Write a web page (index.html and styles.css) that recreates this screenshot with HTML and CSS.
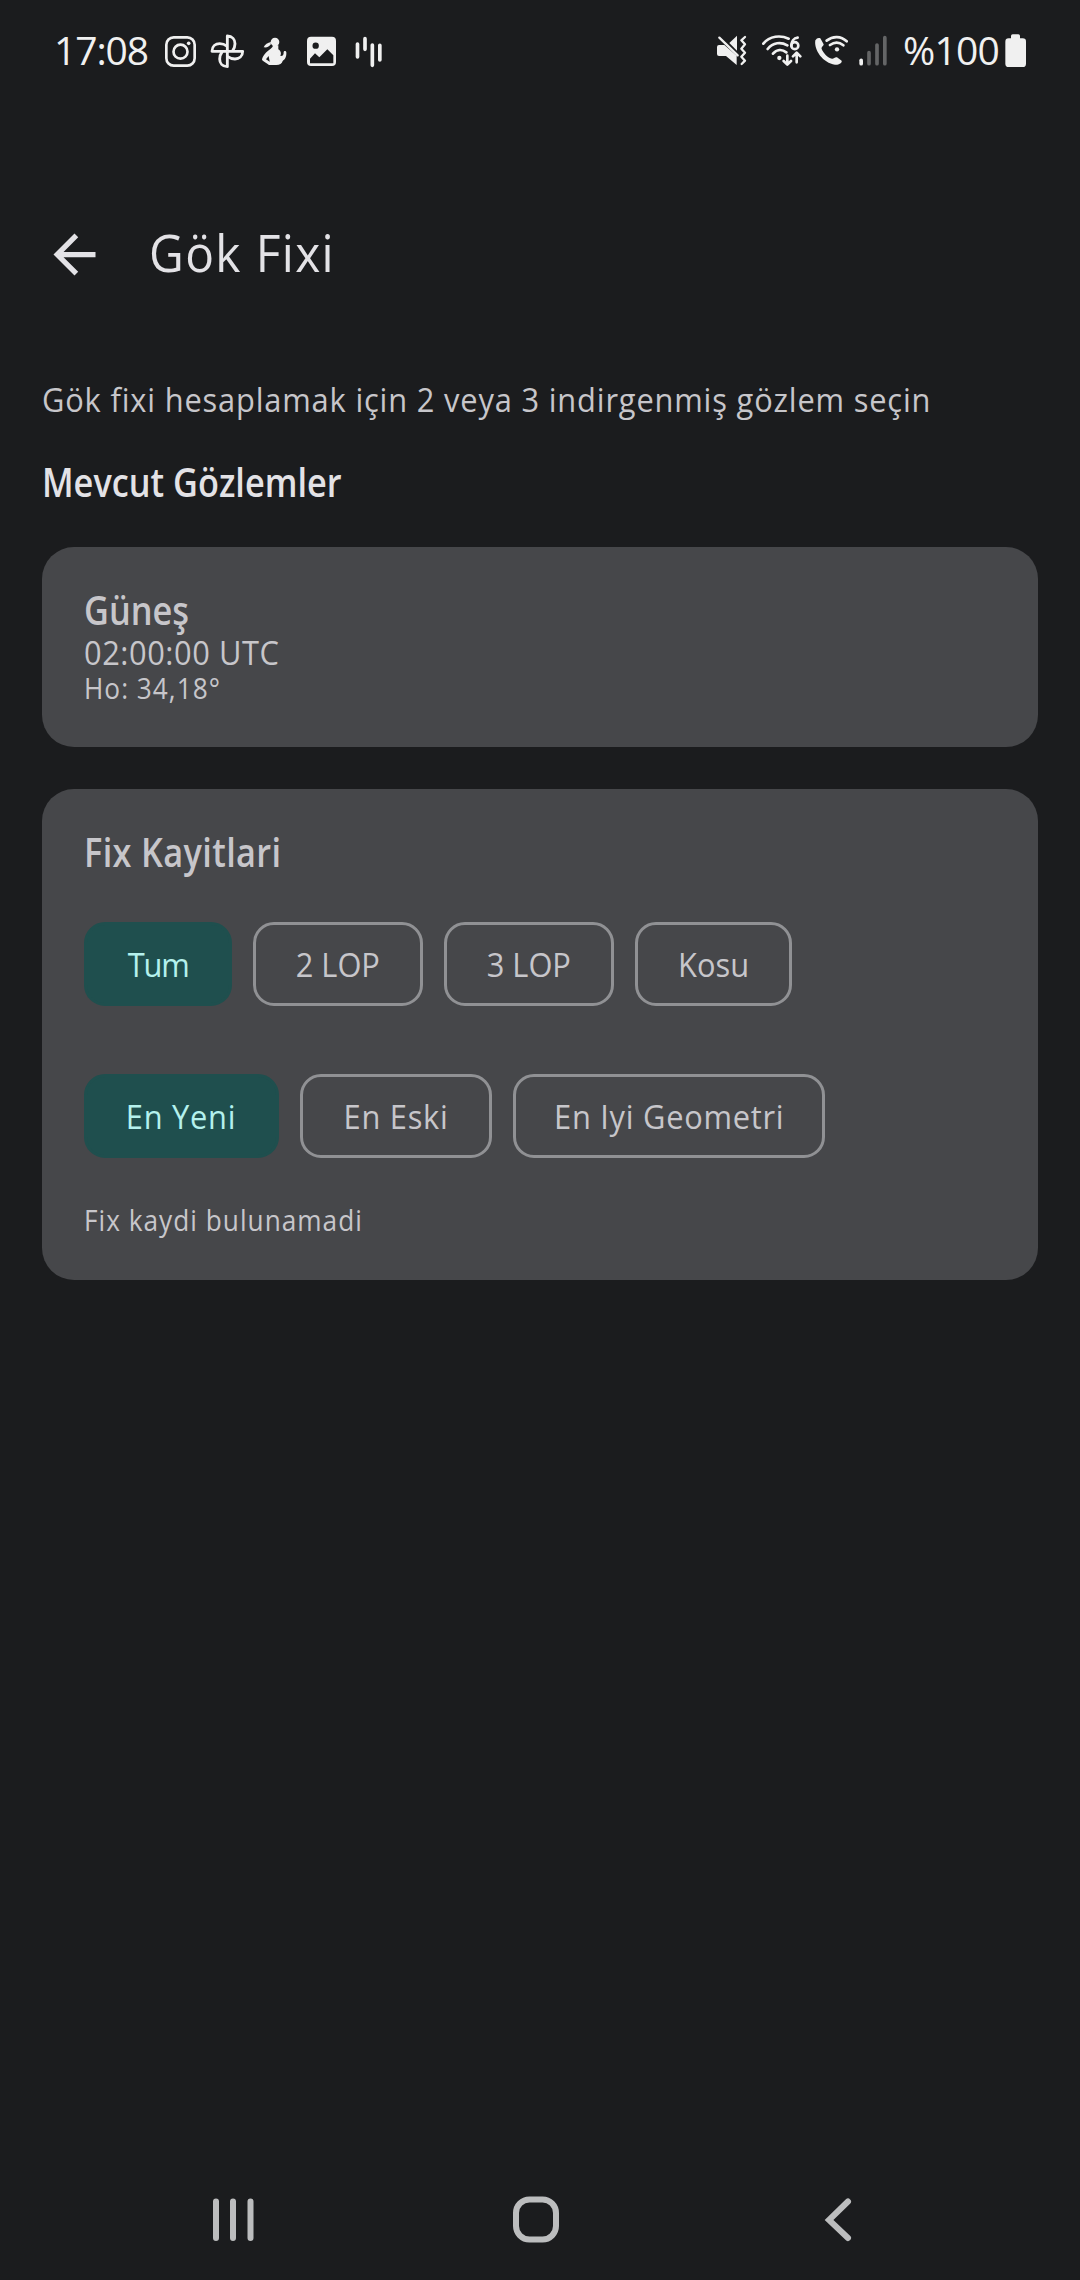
FILE: index.html
```
<!DOCTYPE html>
<html lang="tr">
<head>
  <meta charset="UTF-8">
  <meta name="viewport" content="width=device-width, initial-scale=1.0">
  <title>Gök Fixi</title>
  <link rel="stylesheet" href="styles.css">
</head>
<body>
  <div class="screen">
    <div class="status-bar">
      <span class="time">17:08</span>
      <div class="notifications">
        <!-- camera -->
        <svg width="36" height="36" viewBox="366 42 108 108" fill="none" stroke="#f0f0f0" stroke-width="8">
          <rect x="379" y="52" width="85" height="85" rx="22"/>
          <circle cx="421.500" cy="95" r="21"/>
          <circle cx="446" cy="70" r="5.500" fill="#f0f0f0" stroke="none"/>
        </svg>
        <!-- pinwheel -->
        <svg width="36" height="36" viewBox="507 42 108 108" fill="none" stroke="#f0f0f0" stroke-width="8.500" stroke-linejoin="round">
          <path d="M562 94V48C577 48 585 59 585 71C585 79 582 87 577 94"/>
          <path d="M562 94H608C608 109 597 117 585 117C577 117 569 114 562 109"/>
          <path d="M562 94V140C547 140 539 129 539 117C539 109 542 101 547 94"/>
          <path d="M562 94H516C516 79 527 71 539 71C547 71 555 74 562 79"/>
        </svg>
        <!-- figure -->
        <svg width="36" height="36" viewBox="648 42 108 108" fill="#f0f0f0">
          <circle cx="705" cy="66" r="13"/>
          <path d="M693 66C683 68 675 73 671 82C681 84 688 79 692 73Z"/>
          <path d="M698 76H715V88C724 94 724 102 721 108C729 109 731 104 731 96C731 92 738 91 739 97C740 112 734 119 728 123C726 131 719 135 709 135H687C681 129 671 126 666 120C667 107 679 95 692 86C697 83 699 80 698 76Z"/>
          <path d="M686 108L678 118L689 125Z" fill="#1b1c1e"/>
        </svg>
        <!-- picture -->
        <svg width="36" height="36" viewBox="789 42 108 108">
          <rect x="801" y="50" width="87" height="88" rx="12" fill="#f0f0f0"/>
          <circle cx="827" cy="77" r="9.500" fill="#1b1c1e"/>
          <path d="M810 116L825 100L838 112L862 88L880 106V130H810Z" fill="#1b1c1e"/>
        </svg>
        <!-- sound bars -->
        <svg width="36" height="36" viewBox="930 42 108 108" fill="none" stroke="#f0f0f0" stroke-width="11" stroke-linecap="round">
          <path d="M952.500 72V111M975 56V88M997 75V136M1019.500 76V120"/>
        </svg>
      </div>
      <div class="indicators">
        <!-- muted, vibrate -->
        <svg width="36" height="36" viewBox="42 42 108 108" fill="#f0f0f0">
          <path d="M57 75H73L110 107V135L78 108H57Q51 108 51 102V81Q51 75 57 75Z"/>
          <path d="M111 47V92L88 69Z"/>
          <path d="M58 53L113 106" fill="none" stroke="#f0f0f0" stroke-width="7" stroke-linecap="round"/>
          <path d="M135 51L124 61L135 73L124 86L135 98L124 110L135 122L125 132" fill="none" stroke="#f0f0f0" stroke-width="7" stroke-linecap="round" stroke-linejoin="round"/>
        </svg>
        <!-- wifi 6 -->
        <svg width="42" height="36" viewBox="180 42 126 108" fill="none" stroke="#f0f0f0" stroke-width="8" stroke-linecap="round" stroke-linejoin="round">
          <path d="M190 71C209 47 242 45 266 56M203 87C219 67 243 65 262 76M219 101C230 88 246 87 259 97"/>
          <circle cx="238" cy="114" r="6.500" fill="#f0f0f0" stroke="none"/>
          <circle cx="284.500" cy="77" r="10.500"/>
          <path d="M293 53C281 54 274 65 274 77"/>
          <path d="M262 107V133M251 123L262 134L273 123M290 127V99M279 109L290 98L301 109"/>
        </svg>
        <!-- wifi call -->
        <svg width="36" height="36" viewBox="336 42 108 108" fill="none" stroke="#f0f0f0" stroke-width="8" stroke-linecap="round">
          <path d="M346 61C350 54 356 52 361 55L371 73C371 79 363 81 365 87C371 101 383 113 396 116C401 117 405 110 411 112L425 122C427 129 416 135 405 134C370 130 341 91 346 61Z" fill="#f0f0f0" stroke="none"/>
          <path d="M380 62C399 47 423 48 440 64M390 75C404 65 418 66 430 76"/>
          <circle cx="411" cy="88" r="6.500" fill="#f0f0f0" stroke="none"/>
        </svg>
        <!-- signal -->
        <svg width="30" height="36" viewBox="474 42 90 108" fill="none" stroke="#646566" stroke-width="11" stroke-linecap="round">
          <path d="M483.500 121V131" stroke="#f0f0f0"/>
          <path d="M507 98V131M531 75V131M554.500 53V131"/>
        </svg>
        <span class="percent">%100</span>
        <svg class="battery" width="24" height="36" viewBox="912 42 72 108" fill="#f0f0f0">
          <rect x="933" y="43" width="27" height="22" rx="5"/>
          <rect x="916" y="55" width="62" height="86" rx="10"/>
        </svg>
      </div>
    </div>

    <div class="header">
      <svg width="63" height="63" viewBox="0 0 24 24" fill="#e3e2e6">
        <path d="M20 11H7.830l5.590-5.590L12 4l-8 8 8 8 1.410-1.410L7.830 13H20v-2z"/>
      </svg>
      <h1>Gök Fixi</h1>
    </div>

    <div class="content">
      <p class="hint">Gök fixi hesaplamak için 2 veya 3 indirgenmiş gözlem seçin</p>
      <h2>Mevcut Gözlemler</h2>

      <div class="card observation">
        <h2>Güneş</h2>
        <p class="utc">02:00:00 UTC</p>
        <p class="small">Ho: 34,18°</p>
      </div>

      <div class="card records">
        <h2>Fix Kayitlari</h2>
        <div class="chips types">
          <div class="chip active"><span>Tum</span></div>
          <div class="chip"><span>2 LOP</span></div>
          <div class="chip"><span>3 LOP</span></div>
          <div class="chip"><span>Kosu</span></div>
        </div>
        <div class="chips sorting">
          <div class="chip active"><span>En Yeni</span></div>
          <div class="chip"><span>En Eski</span></div>
          <div class="chip"><span>En Iyi Geometri</span></div>
        </div>
        <p class="small">Fix kaydi bulunamadi</p>
      </div>
    </div>

    <div class="nav-bar">
      <svg width="60" height="60" viewBox="0 0 60 60" fill="none" stroke="#bcbdbe" stroke-width="6" stroke-linecap="round">
        <path d="M13 11.500V48M30 11.500V48M47.500 11.500V48"/>
      </svg>
      <svg width="60" height="60" viewBox="0 0 60 60" fill="none" stroke="#bcbdbe" stroke-width="6">
        <rect x="10" y="9.500" width="40" height="40" rx="13.500"/>
      </svg>
      <svg width="60" height="60" viewBox="0 0 60 60" fill="none" stroke="#bcbdbe" stroke-width="6" stroke-linecap="round">
        <path d="M40 11.500L21 30L40 48"/>
      </svg>
    </div>
  </div>
</body>
</html>
```
FILE: styles.css
```
* {
  margin: 0;
  padding: 0;
  box-sizing: border-box;
}

body {
  font-family: "Open Sans", "Noto Sans", sans-serif;
  background-color: #1b1c1e;
  color: #e3e2e6;
}

svg {
  display: block;
  flex-shrink: 0;
}

/* slightly narrowed letterforms */
h1,
p,
.chip span {
  transform: scaleX(0.92);
  transform-origin: left;
}

.screen {
  display: flex;
  flex-direction: column;
  width: 1080px;
  height: 2280px;
}

.status-bar {
  display: flex;
  align-items: center;
  height: 104px;
  padding: 0 52px 0 54px;
  font-size: 39px;
  line-height: 54px;
  color: #f0f0f0;
}

.time {
  width: 108px;
  padding-bottom: 4px;
  letter-spacing: -1.1px;
}

.notifications {
  display: flex;
  gap: 11px;
}

.indicators {
  display: flex;
  align-items: center;
  gap: 10px;
  margin-left: auto;
}

.percent {
  width: 101px;
  margin-left: 5px;
  padding-bottom: 4px;
  letter-spacing: -0.8px;
}

.battery {
  margin-left: -10px;
}

.header {
  display: flex;
  align-items: center;
  gap: 43px;
  padding: 119px 43px 90px;
}

h1 {
  padding-bottom: 5px;
  font-size: 52px;
  line-height: 56px;
  font-weight: 400;
  letter-spacing: 1.5px;
}

.content {
  padding: 0 42px;
}

.hint {
  width: 980px;
  font-size: 33.5px;
  line-height: 46px;
  letter-spacing: 0.9px;
  white-space: nowrap;
  color: #c7c6ca;
}

h2 {
  font-size: 39px;
  line-height: 40px;
  font-weight: 600;
  transform: scaleX(0.88);
  transform-origin: left;
}

.hint + h2 {
  margin: 40px 0 45px;
}

.card {
  padding: 43px 42px 42px;
  border-radius: 32px;
  background-color: #46474a;
  color: #c7c6ca;
}

.observation {
  height: 200px;
}

.utc {
  font-size: 33.5px;
  line-height: 44px;
  letter-spacing: 0.6px;
}

.small {
  font-size: 28.5px;
  line-height: 28px;
  letter-spacing: 1.1px;
}

.records {
  height: 491px;
  margin-top: 42px;
}

.records h2 {
  letter-spacing: 0.4px;
}

.chips {
  display: grid;
  gap: 21px;
}

.types {
  grid-template-columns: 148px 170px 170px 157px;
  margin-top: 50px;
}

.sorting {
  grid-template-columns: 195px 192px 312px;
  margin: 68px 0 48px;
  letter-spacing: 0.8px;
}

.chip {
  display: flex;
  align-items: center;
  justify-content: center;
  height: 84px;
  border: 3px solid #909194;
  border-radius: 21px;
  font-size: 33.5px;
}

.chip span {
  transform-origin: center;
  white-space: nowrap;
}

.chip.active {
  border-color: #1f4f4e;
  background-color: #1f4f4e;
  color: #b4f1ed;
}

.types .active {
  letter-spacing: -1.2px;
}

.nav-bar {
  display: flex;
  justify-content: space-between;
  align-items: center;
  height: 120px;
  margin-top: auto;
  padding: 0 212px 0 203px;
}
```
